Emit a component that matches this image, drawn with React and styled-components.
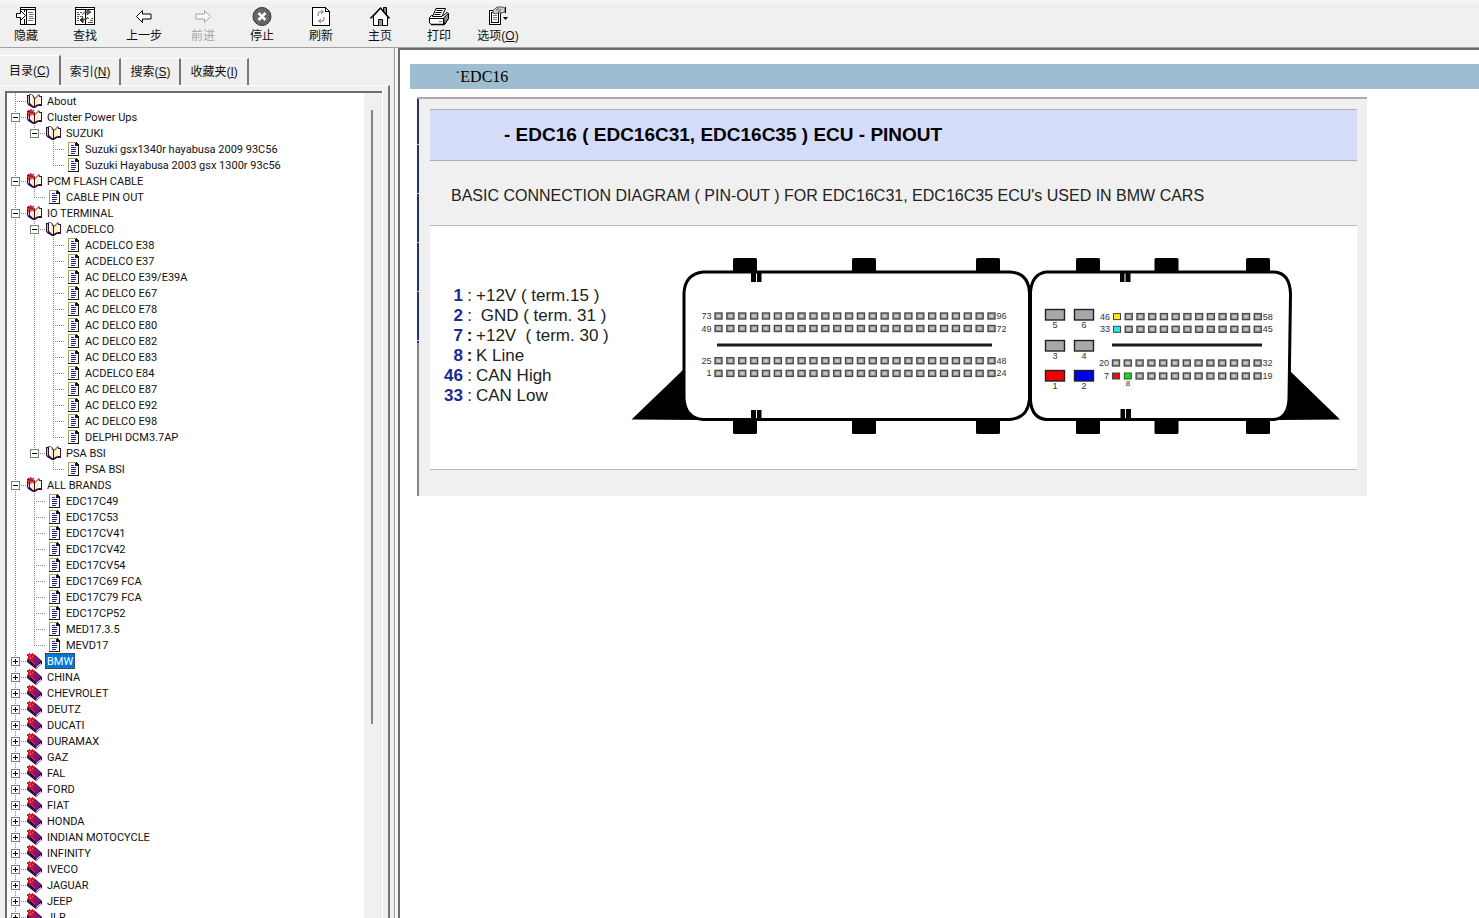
import React from "react";
import styled, { createGlobalStyle, css } from "styled-components";

const GlobalStyle = createGlobalStyle`
  * { box-sizing: border-box; }
  body { margin: 0; background: #f0f0f0; color: #111; font-family: "Liberation Sans", "Noto Sans CJK SC", sans-serif; }
  button { font: inherit; color: inherit; background: none; border: 0; padding: 0; margin: 0; }
  ul { list-style: none; margin: 0; padding: 0; }
`;

const Shell = styled.div`
  height: 100vh;
  display: flex;
  flex-direction: column;
  overflow: hidden;
`;

/* ---------- toolbar ---------- */

const Toolbar = styled.header`
  flex: none;
  height: 48px;
  display: flex;
  gap: 7px;
  padding-top: 6px;
  background: linear-gradient(#f6f7fd, #f0f0f0 5px);
  border-bottom: 1px solid #a0a0a0;
`;

const ToolButton = styled.button`
  width: 52px;
  display: flex;
  flex-direction: column;
  align-items: center;
  font-family: "Liberation Sans", "Noto Sans CJK SC", sans-serif;
  font-size: 12px;
  line-height: 16px;
  white-space: nowrap;
  color: ${(p) => (p.disabled ? "#a6a6a6" : "#111")};
  svg { display: block; margin-bottom: 1px; }
`;

const Frame = ({ children }) => (
  <svg width="22" height="21" viewBox="0 0 22 21" fill="none" stroke="#000" shapeRendering="crispEdges" aria-hidden="true">
    {children}
  </svg>
);

const HideIcon = () => (
  <Frame>
    <path d="M5.500 1.500h15v17h-15z" fill="#fff" />
    <path d="M5 3.500h16M11.500 3v15M9.500 3v3M9.500 13v5" />
    <path d="M13 6.500h5M14 8.500h5M14 10.500h4M14 12.500h5M13 14.500h5" stroke="#777" />
    <path d="M1.500 7.500h4v-3l5 5-5 5v-3h-4z" fill="#fff" shapeRendering="auto" />
  </Frame>
);

const FindIcon = () => (
  <Frame>
    <path d="M1.500 1.500h19v17h-19z" fill="#fff" />
    <path d="M1 3.500h20M11.500 3v15" />
    <path d="M3 6.500h2M6 6.500h2M3 8.500h3M3 10.500h2M6 10.500h3M3 12.500h2M3 14.500h2M14 12.500h1M17 12.500h2M16 14.500h3M14 16.500h5" stroke="#555" />
    <path d="M8 8.500q2-3 5-2.500M13 3.500l4 2.500-4 3z" fill="#555" stroke="#555" shapeRendering="auto" />
    <path d="M14 11q-1 3-5 3M9 11.500L6 14l3 3z" fill="#333" stroke="#333" shapeRendering="auto" />
  </Frame>
);

const BackIcon = () => (
  <Frame>
    <path d="M3.500 10.500l6-6v3.500h8.500v5h-8.500v3.500z" fill="#fff" shapeRendering="auto" />
  </Frame>
);

const ForwardIcon = () => (
  <Frame>
    <path d="M18.500 10.500l-6-6v3.500h-8.500v5h8.500v3.500z" fill="#f8f8f8" stroke="#a6a6a6" shapeRendering="auto" />
  </Frame>
);

const StopIcon = () => (
  <Frame>
    <g shapeRendering="auto">
      <circle cx="11" cy="10.500" r="9" fill="#666" stroke="#333" />
      <path d="M7.500 7l7 7M14.500 7l-7 7" stroke="#fff" strokeWidth="2.500" />
    </g>
  </Frame>
);

const RefreshIcon = () => (
  <Frame>
    <path d="M2.500 1.500h13l4 4v14h-17z" fill="#fff" />
    <path d="M15.500 1.500v4h4" />
    <g stroke="#777" shapeRendering="auto">
      <path d="M8 10V8q0-2 2-2h3M11 4l2.500 2-2.500 2M14 11v2q0 2-2 2H9M11 13l-2.500 2 2.500 2" />
    </g>
  </Frame>
);

const HomeIcon = () => (
  <Frame>
    <g shapeRendering="auto">
      <path d="M14.500 5.500v-4h3v7" fill="#888" />
      <path d="M4.500 10v9.500h14V10l-7-7.500z" fill="#fff" />
      <path d="M1.500 12.500L11.500 2l9 10.500" strokeWidth="1.500" />
      <path d="M9.500 19.500v-6h4v6" fill="#999" />
    </g>
  </Frame>
);

const PrintIcon = () => (
  <Frame>
    <g shapeRendering="auto">
      <path d="M1.500 11.500l2-2h12l3.500-3 1.500 1v5l-4 6h-13l-2-1.500z" fill="#fff" />
      <path d="M15.500 12l5-4.500v5l-4 6z" fill="#8c8c8c" />
      <path d="M1.500 12.500h14v5.500" />
      <path d="M3 18.500h13" strokeWidth="1.500" />
      <path d="M11 15.500h3" stroke="#777" />
      <path d="M8 2.500h9.500l-3.500 8h-9.500z" fill="#fff" />
      <path d="M8.500 4.500h6M7.500 6.500h6M6.500 8.500h6" />
    </g>
  </Frame>
);

const OptionsIcon = () => (
  <Frame>
    <path d="M2.500 4.500h11v14h-11z" fill="#fff" />
    <path d="M4.500 6.500h7v10h-7z" />
    <path d="M6 9.500h4M6 11.500h4M6 13.500h4" stroke="#777" />
    <g shapeRendering="auto">
      <path d="M6 4.500l4-3.500h5l3 1v4l-4 1-2-1-3 2-3-1z" fill="#ccc" stroke="#555" />
      <path d="M9 4l3-1.500M11 5.500l3-2" stroke="#555" />
    </g>
    <path d="M18.500 1v6" />
    <path d="M16 11h5l-2.500 3z" fill="#000" stroke="none" shapeRendering="auto" />
  </Frame>
);

const TOOLS = [
  { label: "隐藏", Icon: HideIcon },
  { label: "查找", Icon: FindIcon },
  { label: "上一步", Icon: BackIcon },
  { label: "前进", Icon: ForwardIcon, disabled: true },
  { label: "停止", Icon: StopIcon },
  { label: "刷新", Icon: RefreshIcon },
  { label: "主页", Icon: HomeIcon },
  { label: "打印", Icon: PrintIcon },
  { label: "选项", hotkey: "O", Icon: OptionsIcon },
];

const Caption = ({ label, hotkey }) => (
  <span>
    {label}
    {hotkey && <>(<u>{hotkey}</u>)</>}
  </span>
);

/* ---------- navigation pane ---------- */

const Workspace = styled.div`
  flex: 1;
  min-height: 0;
  display: flex;
`;

const Sidebar = styled.aside`
  flex: 0 0 390px;
  display: flex;
  flex-direction: column;
  padding-top: 7px;
`;

const TabList = styled.div`
  display: flex;
  align-items: flex-end;
  height: 30px;
`;

const Tab = styled.button`
  min-width: 60px;
  height: ${(p) => (p.$active ? 30 : 27)}px;
  padding: 0 9px;
  border-top: 1px solid #fff;
  border-right: 2px solid #777;
  font-size: 12px;
  line-height: 26px;
  white-space: nowrap;
`;

const TabPanel = styled.div`
  flex: 1;
  min-height: 0;
  display: flex;
  padding: 5px 6px 0 5px;
  border-top: 1px solid #fff;
  border-right: 2px solid #777;
`;

const TreeFrame = styled.div`
  flex: 1;
  min-width: 0;
  display: flex;
  overflow: hidden;
  background: #fff;
  border: solid #6d6d6d;
  border-width: 2px 0 0 2px;
  box-shadow: 1px 0 0 #fff;
`;

const Tree = styled.ul`
  flex: 1;
  min-width: 0;
  padding-left: 1px;
`;

const ScrollTrack = styled.div`
  flex: 0 0 18px;
  display: flex;
  justify-content: center;
  padding-top: 17px;
  background: #f0f0f0;
  border-right: 2px solid #ececec;
`;

const ScrollThumb = styled.div`
  width: 2px;
  height: 76%;
  background: #858585;
`;

const Row = styled.li`
  display: flex;
  height: 16px;
`;

const dots = (dir) => `repeating-linear-gradient(${dir}, #888 0 1px, transparent 1px 2px)`;

const Cell = styled.span`
  flex: 0 0 19px;
  height: 16px;
  padding: 4px 0 0 3px;
  background-repeat: no-repeat;
  ${(p) => p.$line === "through" && css`
    background-image: ${dots("to bottom")};
    background-position: 7px 0;
    background-size: 1px 16px;
  `}
  ${(p) => ["tee", "corner"].includes(p.$line) && css`
    background-image: ${dots("to bottom")}, ${dots("to right")};
    background-position: 7px 0, 7px 8px;
    background-size: 1px ${p.$line === "tee" ? 16 : 8}px, 12px 1px;
  `}
`;

const Toggle = styled.button`
  display: block;
  width: 9px;
  height: 9px;
  svg { display: block; }
`;

const RowIcon = styled.svg`
  flex: 0 0 18px;
  width: 18px;
  height: 16px;
`;

const Label = styled.button`
  padding: 2px 2px 0;
  font-family: Roboto, "Liberation Sans", sans-serif;
  font-size: 11px;
  line-height: 14px;
  white-space: nowrap;
  ${(p) => p.$selected && css`
    background: #0078d7;
    color: #fff;
    outline: 1px dotted #333;
    outline-offset: -1px;
  `}
`;

const Star = () => (
  <g stroke="#d81820" strokeWidth="1.200">
    <path d="M4 0v7M0 3.500h8M1 1l6 5M7 1L1 6" />
  </g>
);

const OpenBook = ({ star }) => (
  <RowIcon viewBox="0 0 18 16" aria-hidden="true">
    <path d="M0 2h2l1-1 3 1 2 3 4-4 1 2h2v10h-4l-3 2H6l-5-3-1-2z" fill="#38103c" />
    <path d="M1 3h1v8l-1-1z" fill="#c9b4cb" />
    <path d="M3 2h2l2 4v7l-2-1-2-2z" fill="#fff" />
    <path d="M5 3l2 3v7l-2-1z" fill="#f7edc4" />
    <path d="M8 6l4-4v9l-3 1-1 1z" fill="#fff2b8" />
    <path d="M12 4h2v7h-2z" fill="#fff" />
    {star && <Star />}
  </RowIcon>
);

const ClosedBook = () => (
  <RowIcon viewBox="0 0 18 16" aria-hidden="true">
    <path d="M0 6l7-5 8 7v3l-6 5-9-7z" fill="#30082e" />
    <path d="M1 6l6-4 7 6-5 5z" fill="#86157c" />
    <path d="M9 14l5-4v1.500l-5 3.500z" fill="#fff" />
    <path d="M4 8l4 3" stroke="#b03a9f" />
    <path d="M0 1h2V0h1v1h2V0h1v2h2v1H7v2h1v1H6v2H5V7H3v2H2V7H0V6h1V3H0z" fill="#d8142c" />
    <path d="M2 2h1v1H2zM5 3h1v1H5zM3 4h1v2H3z" fill="#ff6a50" />
  </RowIcon>
);

const Page = () => (
  <RowIcon viewBox="0 0 18 16" shapeRendering="crispEdges" aria-hidden="true">
    <path d="M3 1h8l3 3v11H3z" fill="#1a1a14" />
    <path d="M3 1h8v1H3z" fill="#a3a66c" />
    <path d="M3 1h1v13H3z" fill="#a3a66c" />
    <path d="M4 2h6v3h3v9H4z" fill="#fff" />
    <path d="M6 4h3v1H6zM6 6h5v1H6zM6 8h5v1H6zM6 10h5v1H6zM6 12h4v1H6z" fill="#22228e" />
  </RowIcon>
);

const leaves = (...labels) => labels.map((label) => ({ label, icon: "page" }));

const CONTENTS = [
  { label: "About", icon: "book" },
  {
    label: "Cluster Power Ups",
    icon: "newBook",
    children: [
      {
        label: "SUZUKI",
        icon: "book",
        children: leaves("Suzuki gsx1340r hayabusa 2009 93C56", "Suzuki Hayabusa 2003 gsx 1300r 93c56"),
      },
    ],
  },
  { label: "PCM FLASH CABLE", icon: "newBook", children: leaves("CABLE PIN OUT") },
  {
    label: "IO TERMINAL",
    icon: "newBook",
    children: [
      {
        label: "ACDELCO",
        icon: "book",
        children: leaves(
          "ACDELCO E38", "ACDELCO E37", "AC DELCO E39/E39A", "AC DELCO E67", "AC DELCO E78", "AC DELCO E80",
          "AC DELCO E82", "AC DELCO E83", "ACDELCO E84", "AC DELCO E87", "AC DELCO E92", "AC DELCO E98", "DELPHI DCM3.7AP"
        ),
      },
      { label: "PSA BSI", icon: "book", children: leaves("PSA BSI") },
    ],
  },
  {
    label: "ALL BRANDS",
    icon: "newBook",
    children: leaves(
      "EDC17C49", "EDC17C53", "EDC17CV41", "EDC17CV42", "EDC17CV54", "EDC17C69 FCA", "EDC17C79 FCA",
      "EDC17CP52", "MED17.3.5", "MEVD17"
    ),
  },
  ...[
    "BMW", "CHINA", "CHEVROLET", "DEUTZ", "DUCATI", "DURAMAX", "GAZ", "FAL", "FORD", "FIAT", "HONDA",
    "INDIAN MOTOCYCLE", "INFINITY", "IVECO", "JAGUAR", "JEEP", "JLR",
  ].map((label) => ({ label, icon: "closed", selected: label === "BMW" })),
];

const ICONS = {
  book: <OpenBook />,
  newBook: <OpenBook star />,
  closed: <ClosedBook />,
  page: <Page />,
};

function TreeNodes({ nodes, guides = [] }) {
  return nodes.map((node, i) => {
    const last = i === nodes.length - 1;
    const open = Boolean(node.children);
    const expandable = open || node.icon === "closed";
    return (
      <React.Fragment key={node.label}>
        <Row role="treeitem" aria-level={guides.length + 1} aria-selected={Boolean(node.selected)}>
          {guides.map((on, g) => <Cell key={g} $line={on ? "through" : "none"} />)}
          <Cell $line={last ? "corner" : "tee"}>
            {expandable && (
              <Toggle aria-label={(open ? "Collapse " : "Expand ") + node.label}>
                <svg width="9" height="9" viewBox="0 0 9 9" shapeRendering="crispEdges">
                  <path d="M.5.5h8v8h-8z" fill="#fff" stroke="#808080" />
                  <path d={open ? "M2 4.500h5" : "M2 4.500h5M4.500 2v5"} stroke="#000" />
                </svg>
              </Toggle>
            )}
          </Cell>
          {ICONS[node.icon]}
          <Label $selected={node.selected}>{node.label}</Label>
        </Row>
        {open && <TreeNodes nodes={node.children} guides={[...guides, !last]} />}
      </React.Fragment>
    );
  });
}

const Splitter = styled.div`
  flex: 0 0 8px;
  padding-left: 4px;
  &::before {
    content: "";
    display: block;
    height: 100%;
    border-left: 1px solid #9a9a9a;
    background: #f6f6f6;
  }
`;

/* ---------- document ---------- */

const Document = styled.main`
  flex: 1;
  min-width: 0;
  overflow: hidden;
  padding: 14px 0 0 10px;
  background: #fff;
  border: solid #6d6d6d;
  border-width: 2px 0 0 2px;
`;

const DocTitle = styled.div`
  height: 25px;
  padding-left: 45px;
  background: #9fbdd1;
  font-family: "Liberation Serif", serif;
  font-size: 16px;
  line-height: 26px;
  color: #000;
`;

const Card = styled.article`
  display: flex;
  max-width: 950px;
  margin: 8px 0 0 7px;
  background: #f0f0f0;
  border-top: 2px solid #ababab;
`;

const EdgeRule = styled.div`
  flex: 0 0 2px;
  background:
    repeating-linear-gradient(transparent 0 48px, #c4c8dc 48px 49px) 0 -3px / 2px 245px no-repeat,
    linear-gradient(#25306f 0 244px, #858585 244px);
`;

const CardBody = styled.div`
  flex: 1;
  min-width: 0;
  padding: 10px 10px 26px 11px;
`;

const Heading = styled.h1`
  margin: 0;
  height: 52px;
  padding-left: 74px;
  background: #d5dcf9;
  border: solid #adadad;
  border-width: 1px 0;
  font-size: 19px;
  line-height: 50px;
  color: #000;
`;

const Intro = styled.p`
  margin: 0;
  padding: 6px 21px 0;
  font-size: 16px;
  line-height: 58px;
  color: #222;
`;

const Figure = styled.section`
  display: flex;
  align-items: flex-start;
  height: 245px;
  background: #fff;
  border: solid #bbb;
  border-width: 1px 0;
`;

const Legend = styled.ul`
  flex: 0 0 200px;
  padding-top: 60px;
  font-size: 17px;
  line-height: 20px;
  white-space: pre;
  color: #222;
`;

const LegendRow = styled.li`
  display: grid;
  grid-template-columns: 33px 13px auto;
`;

const PinNumber = styled.b`
  text-align: right;
  color: #1a2a94;
`;

const Colon = styled.span`
  text-align: center;
  font-weight: ${(p) => (p.$bold ? 700 : 400)};
`;

const LEGEND = [
  ["1", "+12V ( term.15 )"],
  ["2", " GND ( term. 31 )"],
  ["7", "+12V  ( term. 30 )", true],
  ["8", "K Line", true],
  ["46", "CAN High"],
  ["33", "CAN Low"],
];

const Drawing = styled.svg`
  flex: none;
  margin-top: 24px;
  font-family: "Liberation Sans", sans-serif;
`;

function PinRow({ x, y, count, step, from, to, colors = {} }) {
  return (
    <g>
      <text x={x - 7} y={y + 3} textAnchor="end">{from}</text>
      {Array.from({ length: count }, (_, i) => {
        const cx = x + i * step;
        return colors[i] ? (
          <rect key={i} x={cx - 3.5} y={y - 3} width="7" height="6" fill={colors[i]} stroke="#444" />
        ) : (
          <g key={i}>
            <rect x={cx - 3.5} y={y - 3} width="7" height="6" fill="#a9a9a9" stroke="#4b4b4b" strokeWidth="1.4" />
            <rect x={cx - 1.5} y={y - 1} width="3" height="2" fill="#d0d0d0" />
          </g>
        );
      })}
      <text x={x + (count - 1) * step + 5} y={y + 3}>{to}</text>
    </g>
  );
}

const BIG_PINS = [
  [1055, 315, "5", "#a8a8a8"], [1084, 315, "6", "#a8a8a8"],
  [1055, 346, "3", "#a8a8a8"], [1084, 346, "4", "#a8a8a8"],
  [1055, 376, "1", "#f50000"], [1084, 376, "2", "#0000e6"],
];

const Connector = () => (
  <Drawing width="710" height="186" viewBox="630 250 710 186" role="img" aria-label="ECU connector pinout">
    <path d="M631.500 419.500L683 370v30q2 14 18 20z" fill="#000" />
    <path d="M1340 419.500L1290 371v30q-2 14-12 19z" fill="#000" />
    {[733, 852, 976, 1076, 1154.5, 1246].map((x) => (
      <g key={x}>
        <rect x={x} y="258" width="24" height="15" rx="1.500" />
        <rect x={x} y="419" width="24" height="15" rx="1.500" />
      </g>
    ))}
    <g fill="#fff" stroke="#000" strokeWidth="3">
      <path d="M703 272H1010Q1029 273 1029.500 294V399Q1028 418 1010 419.500H703Q685 418 684 398V293Q685 274 703 272z" />
      <path d="M1046 272H1274Q1290 273 1290.500 294L1289 399Q1288 418 1274 419.500H1046Q1032 418 1030.500 401V292Q1032 274 1046 272z" />
    </g>
    <path d="M751 272h5v10h-5zM757 272h4.500v10h-4.500zM751 410h5v10h-5zM757 410h4.500v10h-4.500zM1120 272h4.500v10h-4.500zM1125.500 272h5v10h-5zM1120.500 409h4.500v11h-4.500zM1126 409h5v11h-5z" />
    <path d="M717 345h275M1112 345h150" stroke="#1c1c1c" strokeWidth="3" />
    <g fontSize="9" fill="#333">
      <PinRow x={718.5} y={316} count={24} step={11.87} from="73" to="96" />
      <PinRow x={718.5} y={328.5} count={24} step={11.87} from="49" to="72" />
      <PinRow x={718.5} y={360.7} count={24} step={11.87} from="25" to="48" />
      <PinRow x={718.5} y={373.4} count={24} step={11.87} from="1" to="24" />
      <PinRow x={1117} y={316.6} count={13} step={11.73} from="46" to="58" colors={{ 0: "#f5ee10" }} />
      <PinRow x={1117} y={329.3} count={13} step={11.73} from="33" to="45" colors={{ 0: "#25e5ee" }} />
      <PinRow x={1116} y={363} count={13} step={11.8} from="20" to="32" />
      <PinRow x={1116} y={376} count={13} step={11.8} from="7" to="19" colors={{ 0: "#dc1414", 1: "#18dc18" }} />
      {BIG_PINS.map(([x, y, n, fill]) => (
        <g key={n}>
          <rect x={x - 9.5} y={y - 5.5} width="19" height="10.500" fill={fill} stroke="#222" strokeWidth="1.400" />
          <text x={x} y={y + 13} textAnchor="middle">{n}</text>
        </g>
      ))}
      <text x="1128" y="386" fontSize="8" textAnchor="middle">8</text>
    </g>
  </Drawing>
);

export default function App() {
  return (
    <Shell>
      <GlobalStyle />
      <Toolbar>
        {TOOLS.map(({ label, hotkey, Icon, disabled }) => (
          <ToolButton key={label} disabled={disabled}>
            <Icon />
            <Caption label={label} hotkey={hotkey} />
          </ToolButton>
        ))}
      </Toolbar>
      <Workspace>
        <Sidebar>
          <TabList role="tablist">
            <Tab role="tab" aria-selected="true" $active><Caption label="目录" hotkey="C" /></Tab>
            <Tab role="tab"><Caption label="索引" hotkey="N" /></Tab>
            <Tab role="tab"><Caption label="搜索" hotkey="S" /></Tab>
            <Tab role="tab"><Caption label="收藏夹" hotkey="I" /></Tab>
          </TabList>
          <TabPanel role="tabpanel">
            <TreeFrame>
              <Tree role="tree">
                <TreeNodes nodes={CONTENTS} />
              </Tree>
              <ScrollTrack><ScrollThumb /></ScrollTrack>
            </TreeFrame>
          </TabPanel>
        </Sidebar>
        <Splitter />
        <Document>
          <DocTitle>˙EDC16</DocTitle>
          <Card>
            <EdgeRule />
            <CardBody>
              <Heading>- EDC16 ( EDC16C31, EDC16C35 ) ECU - PINOUT</Heading>
              <Intro>BASIC CONNECTION DIAGRAM ( PIN-OUT ) FOR EDC16C31, EDC16C35 ECU's USED IN BMW CARS</Intro>
              <Figure>
                <Legend>
                  {LEGEND.map(([pin, text, bold]) => (
                    <LegendRow key={pin}>
                      <PinNumber>{pin}</PinNumber>
                      <Colon $bold={bold}>:</Colon>
                      <span>{text}</span>
                    </LegendRow>
                  ))}
                </Legend>
                <Connector />
              </Figure>
            </CardBody>
          </Card>
        </Document>
      </Workspace>
    </Shell>
  );
}
